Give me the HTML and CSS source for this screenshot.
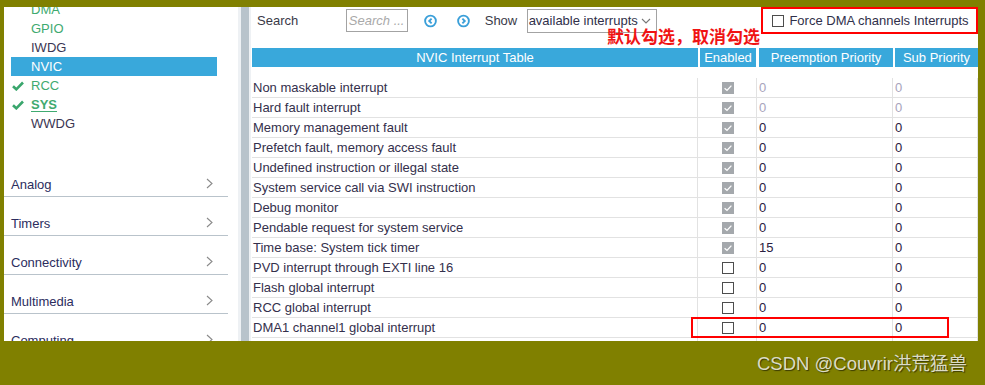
FILE: index.html
```html
<!DOCTYPE html>
<html lang="en">

<head>
    <meta charset="UTF-8">
    <meta name="viewport" content="width=device-width, initial-scale=1.0">
    <title>NVIC Configuration</title>
    <link rel="stylesheet" href="styles.css">
</head>

<body>
    <div class="window">
        <!-- Left: peripheral tree -->
        <div class="sidebar">
            <ul class="periph-list">
                <li class="done"><span class="mark"></span>DMA</li>
                <li class="done"><span class="mark"></span>GPIO</li>
                <li><span class="mark"></span>IWDG</li>
                <li class="active"><span class="mark"></span>NVIC</li>
                <li class="done"><span class="mark"><svg class="tick" viewBox="0 0 12 10"><path d="M1 5.2 L4.3 8.3 L11 1.5"/></svg></span>RCC</li>
                <li class="done sys"><span class="mark"><svg class="tick" viewBox="0 0 12 10"><path d="M1 5.2 L4.3 8.3 L11 1.5"/></svg></span><span>SYS</span></li>
                <li><span class="mark"></span>WWDG</li>
            </ul>

            <div class="cat"><span>Analog</span><svg class="chev" viewBox="0 0 7 11"><path d="M1 1 L6 5.5 L1 10"/></svg></div>
            <div class="cat"><span>Timers</span><svg class="chev" viewBox="0 0 7 11"><path d="M1 1 L6 5.5 L1 10"/></svg></div>
            <div class="cat"><span>Connectivity</span><svg class="chev" viewBox="0 0 7 11"><path d="M1 1 L6 5.5 L1 10"/></svg></div>
            <div class="cat"><span>Multimedia</span><svg class="chev" viewBox="0 0 7 11"><path d="M1 1 L6 5.5 L1 10"/></svg></div>
            <div class="cat"><span>Computing</span><svg class="chev" viewBox="0 0 7 11"><path d="M1 1 L6 5.5 L1 10"/></svg></div>
        </div>

        <div class="splitter"><div class="grip"></div></div>

        <!-- Right: NVIC table -->
        <div class="main">
            <div class="toolbar">
                <span class="search-lbl">Search</span>
                <span class="search-box">Search ...</span>
                <span class="nav-btn">
                    <svg viewBox="0 0 14 14"><circle cx="7" cy="7" r="5.8"/><path d="M8.2 4.4 L5.6 7 L8.2 9.6"/></svg>
                </span>
                <span class="nav-btn next">
                    <svg viewBox="0 0 14 14"><circle cx="7" cy="7" r="5.8"/><path d="M5.8 4.4 L8.4 7 L5.8 9.6"/></svg>
                </span>
                <span class="show-lbl">Show</span>
                <span class="select">available interrupts
                    <svg viewBox="0 0 10 6"><path d="M1 1 L5 5 L9 1"/></svg>
                </span>
                <label class="force-box"><span class="cb"></span>Force DMA channels Interrupts</label>
            </div>

            <div class="note">默认勾选，取消勾选</div>

            <div class="nvic-table">
                <div class="thead">
                    <div class="th">NVIC Interrupt Table</div>
                    <div class="th th-en">Enabled</div>
                    <div class="th">Preemption Priority</div>
                    <div class="th">Sub Priority</div>
                </div>
                <div class="tbody">
                    <div class="tr"><div class="td">Non maskable interrupt</div><div class="td en"><span class="cb on"></span></div><div class="td num dim">0</div><div class="td num dim">0</div></div>
                    <div class="tr"><div class="td">Hard fault interrupt</div><div class="td en"><span class="cb on"></span></div><div class="td num dim">0</div><div class="td num dim">0</div></div>
                    <div class="tr"><div class="td">Memory management fault</div><div class="td en"><span class="cb on"></span></div><div class="td num">0</div><div class="td num">0</div></div>
                    <div class="tr"><div class="td">Prefetch fault, memory access fault</div><div class="td en"><span class="cb on"></span></div><div class="td num">0</div><div class="td num">0</div></div>
                    <div class="tr"><div class="td">Undefined instruction or illegal state</div><div class="td en"><span class="cb on"></span></div><div class="td num">0</div><div class="td num">0</div></div>
                    <div class="tr"><div class="td">System service call via SWI instruction</div><div class="td en"><span class="cb on"></span></div><div class="td num">0</div><div class="td num">0</div></div>
                    <div class="tr"><div class="td">Debug monitor</div><div class="td en"><span class="cb on"></span></div><div class="td num">0</div><div class="td num">0</div></div>
                    <div class="tr"><div class="td">Pendable request for system service</div><div class="td en"><span class="cb on"></span></div><div class="td num">0</div><div class="td num">0</div></div>
                    <div class="tr"><div class="td">Time base: System tick timer</div><div class="td en"><span class="cb on"></span></div><div class="td num">15</div><div class="td num">0</div></div>
                    <div class="tr"><div class="td">PVD interrupt through EXTI line 16</div><div class="td en"><span class="cb"></span></div><div class="td num">0</div><div class="td num">0</div></div>
                    <div class="tr"><div class="td">Flash global interrupt</div><div class="td en"><span class="cb"></span></div><div class="td num">0</div><div class="td num">0</div></div>
                    <div class="tr"><div class="td">RCC global interrupt</div><div class="td en"><span class="cb"></span></div><div class="td num">0</div><div class="td num">0</div></div>
                    <div class="tr"><div class="td">DMA1 channel1 global interrupt</div><div class="td en"><span class="cb"></span></div><div class="td num">0</div><div class="td num">0</div></div>
                    <div class="tr"><div class="td"></div><div class="td en"></div><div class="td num"></div><div class="td num"></div></div>
                </div>
            </div>

            <!-- red annotation around the DMA1 row -->
            <div class="mark-row"></div>
        </div>
    </div>

    <div class="watermark">CSDN @Couvrir洪荒猛兽</div>
</body>
</html>
```

FILE: styles.css
```css
html, body {
    margin: 0;
    height: 385px;
    overflow: hidden;
}

body {
    position: relative;
    background-color: #808000;
    font-family: "Liberation Sans", Arial, sans-serif;
    font-size: 13px;
    color: #33304a;
}

.window {
    display: flex;
    width: 974px;
    height: 334px;
    margin: 7px 0 0 4px;
    background-color: #fff;
    overflow: hidden;
}

/* ---------- sidebar ---------- */
.sidebar {
    width: 234px;
    flex-shrink: 0;
    overflow: hidden;
}

.periph-list {
    list-style: none;
    margin: -7px 0 0 7px;
    padding: 0;
    width: 206px;
}

.periph-list li {
    display: flex;
    align-items: center;
    height: 19px;
    line-height: 19px;
    color: #3a3552;
}

.periph-list li.done {
    color: #3faa70;
}

.periph-list li.active {
    background-color: #39a8db;
    color: #fff;
}

.periph-list li.sys span:last-child {
    font-weight: bold;
    text-decoration: underline;
    text-underline-offset: 2px;
}

.mark {
    display: flex;
    align-items: center;
    width: 20px;
    height: 19px;
    flex-shrink: 0;
}

.tick {
    width: 12px;
    height: 10px;
    margin-left: 1px;
    fill: none;
    stroke: #3aa66d;
    stroke-width: 2.6;
}

.cat {
    display: flex;
    justify-content: space-between;
    align-items: center;
    height: 39px;
    box-sizing: border-box;
    margin-right: 10px;
    padding: 19px 15px 4px 7px;
    line-height: 15px;
    border-bottom: 1px solid #b9c3cb;
    color: #2c2d5e;
}

.cat:first-of-type {
    margin-top: 25px;
}

.chev {
    width: 7px;
    height: 11px;
    margin-top: -3px;
    fill: none;
    stroke: #8a8a8a;
    stroke-width: 1.1;
}

/* ---------- splitter ---------- */
.splitter {
    width: 13px;
    flex-shrink: 0;
    padding: 0 2px 0 3px;
    box-sizing: border-box;
    background-color: #eef1f4;
}

.grip {
    height: 100%;
    background-color: #b8c3cb;
}

/* ---------- main ---------- */
.main {
    position: relative;
    width: 727px;
    flex-shrink: 0;
}

.toolbar {
    display: flex;
    align-items: center;
    height: 27px;
    margin-bottom: 14px;
    color: #3a3a48;
}

.search-lbl {
    width: 89px;
    margin-left: 6px;
}

.search-box {
    width: 62px;
    height: 23px;
    box-sizing: border-box;
    border: 1px solid #a3a3a3;
    padding-left: 2px;
    line-height: 21px;
    font-style: italic;
    color: #a9a9a9;
    white-space: nowrap;
    overflow: hidden;
}

.nav-btn {
    display: flex;
    width: 13px;
    height: 14px;
    margin-left: 16px;
}

.nav-btn.next {
    margin-left: 20px;
}

.nav-btn svg {
    width: 14px;
    height: 14px;
    fill: none;
    stroke: #3a9fd9;
    stroke-width: 2;
}

.show-lbl {
    width: 42px;
    margin-left: 15px;
}

.select {
    display: flex;
    align-items: center;
    justify-content: space-between;
    width: 131px;
    height: 24px;
    box-sizing: border-box;
    border: 1px solid #a3a3a3;
    padding: 0 5px 0 1px;
    color: #30304a;
}

.select svg {
    width: 10px;
    height: 6px;
    fill: none;
    stroke: #777;
    stroke-width: 1.1;
}

.force-box {
    display: flex;
    align-items: center;
    width: 217px;
    height: 27px;
    box-sizing: border-box;
    margin-left: 104px;
    border: 2px solid #f00;
    padding-left: 9px;
    color: #30304a;
}

.force-box .cb {
    margin-right: 5px;
}

.cb {
    display: inline-block;
    width: 12px;
    height: 12px;
    box-sizing: border-box;
    border: 1px solid #4d4d4d;
    background-color: #fff;
}

.cb.on {
    border: none;
    background-color: #a4a8ac;
    background-image: url("data:image/svg+xml,%3Csvg xmlns='http://www.w3.org/2000/svg' viewBox='0 0 12 12'%3E%3Cpath d='M2.6 6.2 L5 8.4 L9.4 3.6' fill='none' stroke='white' stroke-width='1.3'/%3E%3C/svg%3E");
}

.note {
    position: absolute;
    left: 356px;
    top: 20px;
    font-family: "Noto Sans CJK SC", sans-serif;
    font-weight: bold;
    font-size: 17px;
    line-height: 1;
    color: #f01414;
}

/* ---------- table ---------- */
.nvic-table {
    margin-left: 1px;
    width: 726px;
}

.thead,
.tr {
    display: grid;
    grid-template-columns: 446px 59px 136px 85px;
}

.thead {
    height: 19px;
    margin-bottom: 11px;
}

.th {
    margin-left: 2px;
    background-color: #39a8db;
    color: #fff;
    text-align: center;
    line-height: 19px;
}

.th:first-child {
    margin-left: 0;
}

.th.th-en {
    margin-right: 1px;
}

.tr {
    height: 20px;
    box-sizing: border-box;
    border-bottom: 1px solid #e2e2e2;
}

.td {
    border-right: 1px solid #e2e2e2;
    line-height: 19px;
    padding-left: 1px;
    white-space: nowrap;
    color: #34304c;
}

.td.en {
    display: flex;
    align-items: center;
    justify-content: center;
}

.td.num {
    padding-left: 2px;
    color: #2a2040;
}

.td.dim {
    color: #a8a4bc;
}

.mark-row {
    position: absolute;
    left: 440px;
    top: 310px;
    width: 258px;
    height: 21px;
    box-sizing: border-box;
    border: 2px solid #f00;
}

.watermark {
    position: absolute;
    left: 757px;
    top: 353px;
    font-family: "Liberation Sans", "Noto Sans CJK SC", sans-serif;
    font-size: 18.5px;
    line-height: 22px;
    color: #dcdcc6;
    text-shadow: 1px 1px 1px rgba(40, 40, 0, 0.8);
    white-space: nowrap;
}
```
